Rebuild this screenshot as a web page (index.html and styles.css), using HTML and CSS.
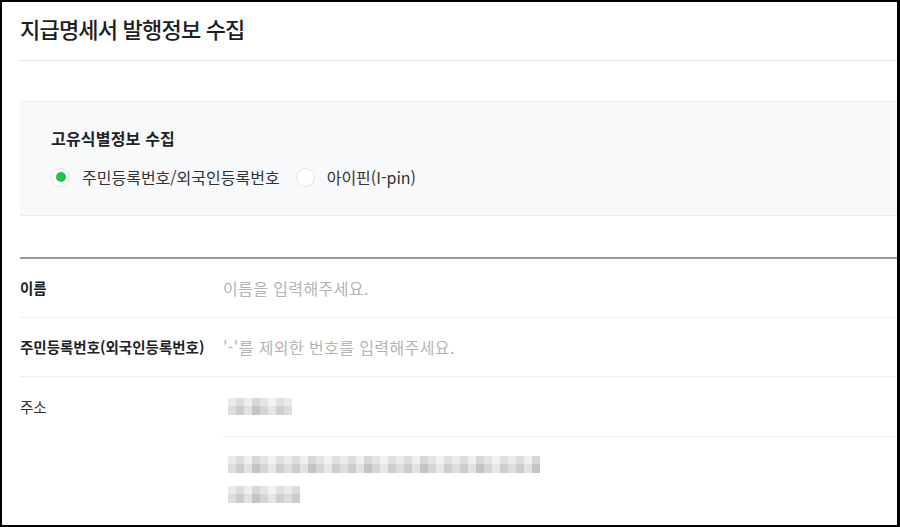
FILE: index.html
```html
<!DOCTYPE html>
<html lang="ko">
<head>
    <meta charset="UTF-8">
    <meta name="viewport" content="width=device-width, initial-scale=1.0">
    <title>지급명세서 발행정보 수집</title>
    <link rel="stylesheet" href="styles.css">
</head>
<body>

<div class="frame">
    <div class="page">

        <h1 class="page-title">지급명세서 발행정보 수집</h1>

        <section class="collect-box">
            <h2 class="collect-title">고유식별정보 수집</h2>
            <div class="radio-group">
                <label class="radio checked"><span class="radio-mark"></span>주민등록번호/외국인등록번호</label>
                <label class="radio"><span class="radio-mark"></span>아이핀(I-pin)</label>
            </div>
        </section>

        <div class="form-table">
            <div class="form-row">
                <div class="form-label">이름</div>
                <div class="form-field"><span class="placeholder">이름을 입력해주세요.</span></div>
            </div>
            <div class="form-row">
                <div class="form-label">주민등록번호(외국인등록번호)</div>
                <div class="form-field"><span class="placeholder">'-'를 제외한 번호를 입력해주세요.</span></div>
            </div>
            <div class="form-row address">
                <div class="form-label light">주소</div>
                <div class="form-field">
                    <div class="address-zip"><span class="mosaic short"></span></div>
                    <div class="address-detail">
                        <div><span class="mosaic long"></span></div>
                        <div><span class="mosaic mid"></span></div>
                    </div>
                </div>
            </div>
        </div>

    </div>
</div>

</body>
</html>
```

FILE: styles.css
```css
body {
    margin: 0;
    font-family: "Noto Sans CJK KR", "Noto Sans", sans-serif;
    background-color: #fff;
    color: #222;
}

.frame {
    width: 900px;
    height: 527px;
    box-sizing: border-box;
    border: 2px solid #000;
    border-right-width: 3px;
    overflow: hidden;
}

.page {
    padding-left: 18px;
}

.page-title {
    margin: 0;
    height: 58px;
    line-height: 52px;
    font-size: 22px;
    font-weight: 500;
    letter-spacing: -0.8px;
    color: #1e1e1e;
    border-bottom: 1px solid #e6e6e6;
}

.collect-box {
    margin-top: 40px;
    padding: 25px 31px 28px;
    background-color: #f8f9fa;
    border-top: 1px solid #f1f2f3;
    border-bottom: 1px solid #ebebeb;
}

.collect-title {
    margin: 0;
    font-size: 16px;
    line-height: 22px;
    font-weight: 700;
    letter-spacing: 0.2px;
    color: #222;
}

.radio-group {
    display: flex;
    align-items: center;
    margin-top: 18px;
    height: 20px;
}

.radio {
    display: flex;
    align-items: center;
    font-size: 16px;
    color: #333;
    margin-right: 16px;
}

.radio-mark {
    width: 19px;
    height: 19px;
    box-sizing: border-box;
    border-radius: 50%;
    background-color: #fff;
    border: 1px solid #e4e4e4;
    margin-right: 12px;
    display: flex;
    align-items: center;
    justify-content: center;
}

.radio.checked .radio-mark::after {
    content: "";
    width: 10px;
    height: 10px;
    border-radius: 50%;
    background-color: #1cc44a;
}

.form-table {
    margin-top: 41px;
    border-top: 2px solid #999;
}

.form-row {
    display: flex;
    height: 59px;
    box-sizing: border-box;
    border-bottom: 1px solid #efefef;
}

.form-label {
    width: 203px;
    flex-shrink: 0;
    line-height: 58px;
    font-size: 14.5px;
    font-weight: 700;
    color: #222;
}

.form-label.light {
    font-weight: 400;
    line-height: 60px;
    color: #333;
}

.form-field {
    flex: 1;
    line-height: 58px;
}

.placeholder {
    font-size: 16px;
    letter-spacing: 0.4px;
    color: #b4b4b4;
}

.form-row.address {
    height: auto;
    border-bottom: none;
}

.address-zip {
    height: 60px;
    box-sizing: border-box;
    border-bottom: 1px solid #efefef;
    padding-left: 5px;
    display: flex;
    align-items: center;
}

.address-detail {
    padding: 12px 0 0 5px;
}

.address-detail div {
    height: 30px;
    display: flex;
    align-items: center;
}

.mosaic {
    display: inline-block;
    height: 17px;
    background:
        linear-gradient(to bottom, rgba(255, 255, 255, 0.25) 0 50%, rgba(0, 0, 0, 0.03) 50% 100%),
        repeating-linear-gradient(90deg, #e4e4e6 0 8px, #d2d2d4 8px 16px, #e9e9ea 16px 24px, #cacacc 24px 32px, #dcdcdd 32px 40px, #eeeeee 40px 48px, #d6d6d8 48px 56px);
    filter: blur(0.5px);
}

.mosaic.short {
    width: 64px;
}

.mosaic.long {
    width: 312px;
}

.mosaic.mid {
    width: 72px;
}
```
